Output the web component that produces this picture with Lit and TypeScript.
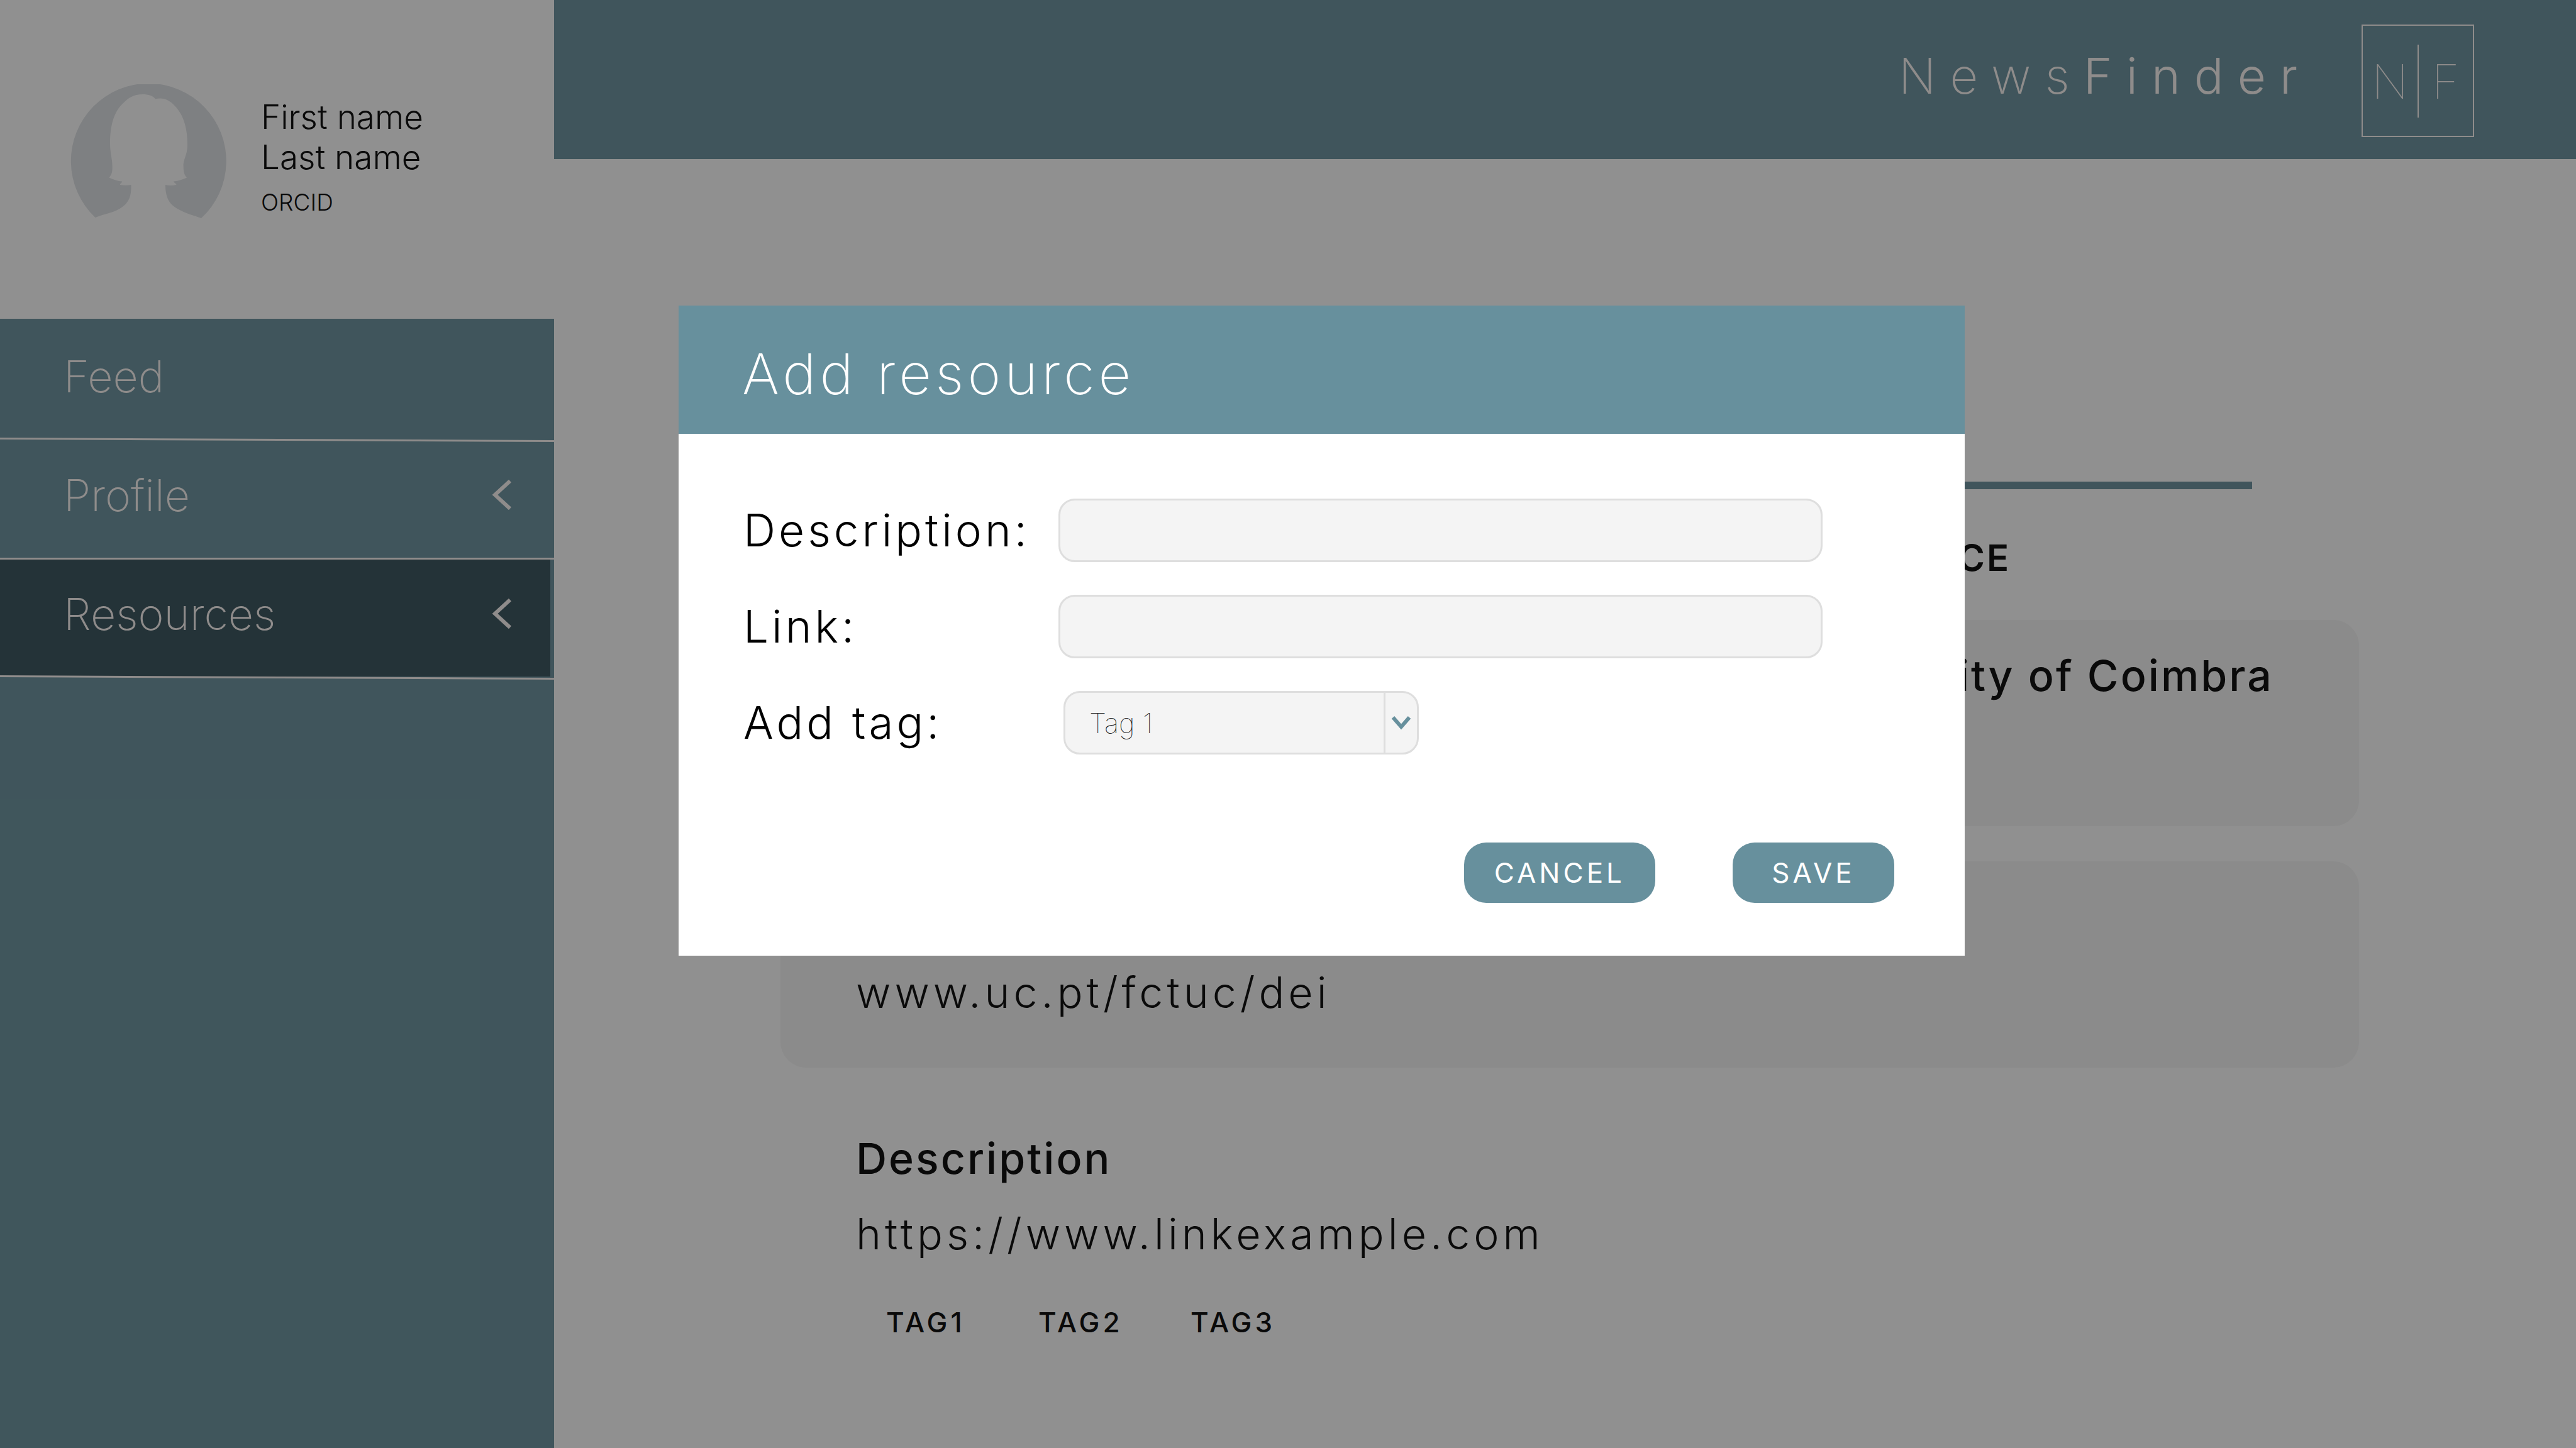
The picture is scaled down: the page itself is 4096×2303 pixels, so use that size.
import { LitElement, html, css, svg, nothing } from "lit";
import { customElement, property, state } from "lit/decorators.js";
import { classMap } from "lit/directives/class-map.js";

interface NavEntry {
  label: string;
  expandable: boolean;
  active: boolean;
  slope: number;
}

interface Resource {
  title?: string;
  titleEnd?: boolean;
  url?: string;
  tags: string[];
  shaded: boolean;
}

const NAV: NavEntry[] = [
  { label: "Feed", expandable: false, active: false, slope: 2 },
  { label: "Profile", expandable: true, active: false, slope: 0 },
  { label: "Resources", expandable: true, active: true, slope: 2 },
];

const RESOURCES: Resource[] = [
  { title: "ity of Coimbra", titleEnd: true, tags: [], shaded: true },
  { url: "www.uc.pt/fctuc/dei", tags: [], shaded: true },
  {
    title: "Description",
    url: "https://www.linkexample.com",
    tags: ["TAG1", "TAG2", "TAG3"],
    shaded: false,
  },
];

const chevronLeft = svg`<path d="M29 2 L5 24 L29 46" fill="none" stroke="currentColor" stroke-width="6" />`;

@customElement("nf-sidebar")
class NfSidebar extends LitElement {
  static styles = css`
    :host {
      display: flex;
      flex-direction: column;
      background: #67909d;
      color: #fdf8f6;
    }
    .user {
      display: flex;
      align-items: flex-start;
      gap: 55px;
      height: 507px;
      box-sizing: border-box;
      padding: 134px 40px 0 112px;
      background: #fff;
      color: #000;
    }
    .avatar {
      width: 248px;
      height: 213px;
      flex: none;
    }
    .who {
      padding-top: 20px;
      font-size: 53px;
      line-height: 64px;
      font-weight: 300;
    }
    .who p {
      margin: 0;
    }
    .who .orcid {
      font-size: 37px;
      line-height: 80px;
    }
    ul {
      list-style: none;
      margin: 0;
      padding: 5px 0 0;
    }
    .item {
      display: flex;
      align-items: center;
      justify-content: space-between;
      height: 186px;
      box-sizing: border-box;
      padding: 0 67px 14px 101px;
      color: inherit;
      text-decoration: none;
      font-size: 70px;
      font-weight: 200;
    }
    .active {
      margin-right: 6px;
      padding-right: 61px;
      background: #324e58;
    }
    .chevron {
      width: 32px;
      height: 48px;
    }
    .line {
      display: block;
      width: 100%;
      height: 3px;
      overflow: visible;
    }
  `;

  render() {
    return html`
      <div class="user">
        <svg class="avatar" viewBox="0 0 248 213" aria-hidden="true">
          <path
            fill="#dde0e4"
            d="M39.5 212 A123.5 123.5 0 1 1 208 213 C194 208 182 205 172 199 C159 192 151 183 151 160 C157 161.500 163 161 168 160 C170 159 164 156.500 164 154.500 C172 154 179 151 185 148.500 C179 142 180 134 179.500 128 C180 119 186 112 186 96 C186 72 181 58 176 48 C168 34 154 18 135 23.500 C131 18 124 16 115 16 C100 16 92 22 85 29 C68 44 63 68 63 94 C63 108 66 116 66.500 128 C67 140 66 143 61.500 148.500 C67 151 74 154 82 154.500 C83 156 79 157 79 160 C85 161 91 161 96.500 160 C97 176 94 186 84 194 C70 205 56 205 39.500 212 Z"
          />
        </svg>
        <div class="who">
          <p>First name</p>
          <p>Last name</p>
          <p class="orcid">ORCID</p>
        </div>
      </div>
      <nav>
        <ul>
          ${NAV.map(
            (n) => html`<li>
              <a class=${classMap({ item: true, active: n.active })} href="#${n.label.toLowerCase()}">
                <span>${n.label}</span>
                ${n.expandable
                  ? html`<svg class="chevron" viewBox="0 0 32 48" aria-hidden="true">${chevronLeft}</svg>`
                  : nothing}
              </a>
              <svg class="line" viewBox="0 0 100 3" preserveAspectRatio="none" aria-hidden="true">
                <line x1="0" y1=${1.5 - n.slope} x2="100" y2=${1.5 + n.slope} stroke="currentColor" stroke-width="3" vector-effect="non-scaling-stroke" />
              </svg>
            </li>`
          )}
        </ul>
      </nav>
    `;
  }
}

@customElement("nf-topbar")
class NfTopbar extends LitElement {
  static styles = css`
    :host {
      display: flex;
      align-items: center;
      justify-content: flex-end;
      gap: 80px;
      height: 253px;
      box-sizing: border-box;
      padding: 4px 162px 0 0;
      background: #67909d;
      color: #fdf8f6;
    }
    .wordmark {
      padding-bottom: 16px;
      font-size: 78px;
      font-weight: 200;
      letter-spacing: 22px;
    }
    .wordmark b {
      font-weight: 300;
    }
    .logo {
      display: grid;
      grid-template-columns: 1fr 2px 1fr;
      align-items: center;
      justify-items: center;
      width: 179px;
      height: 179px;
      box-sizing: border-box;
      border: 2px solid;
      font-size: 76px;
      font-weight: 100;
    }
    .bar {
      width: 2px;
      height: 116px;
      background: #fdf8f6;
    }
  `;

  render() {
    return html`
      <span class="wordmark">News<b>Finder</b></span>
      <div class="logo"><span>N</span><span class="bar"></span><span>F</span></div>
    `;
  }
}

@customElement("nf-card")
class NfCard extends LitElement {
  @property({ attribute: false }) item!: Resource;

  static styles = css`
    :host {
      display: block;
    }
    .card {
      display: grid;
      grid-template-rows: 100px 100px auto;
      row-gap: 20px;
      min-height: 328px;
      box-sizing: border-box;
      padding: 38px 136px 0 120px;
      border-radius: 41px;
      font-size: 68px;
      line-height: 100px;
    }
    .shaded {
      background: #f5f5f5;
    }
    h3 {
      grid-row: 1;
      margin: 0;
      font-size: inherit;
      font-weight: 500;
      letter-spacing: 3px;
      white-space: nowrap;
    }
    .end {
      text-align: right;
    }
    a {
      grid-row: 2;
      justify-self: start;
      color: inherit;
      text-decoration: none;
      font-weight: 300;
      letter-spacing: 6px;
    }
    .tags {
      grid-row: 3;
      display: grid;
      grid-template-columns: repeat(3, 242px);
      margin: 39px 0 0;
      padding: 0 0 0 48px;
      list-style: none;
      font-size: 44px;
      line-height: 64px;
      font-weight: 500;
      letter-spacing: 5px;
    }
  `;

  render() {
    const r = this.item;
    return html`<article class=${classMap({ card: true, shaded: r.shaded })}>
      ${r.title ? html`<h3 class=${classMap({ end: !!r.titleEnd })}>${r.title}</h3>` : nothing}
      ${r.url ? html`<a href="#resource">${r.url}</a>` : nothing}
      ${r.tags.length ? html`<ul class="tags">${r.tags.map((t) => html`<li>${t}</li>`)}</ul>` : nothing}
    </article>`;
  }
}

@customElement("nf-dialog")
class NfDialog extends LitElement {
  @state() private tag = "Tag 1";

  static styles = css`
    :host {
      display: block;
      background: #fff;
      color: #000;
    }
    header {
      height: 204px;
      box-sizing: border-box;
      padding: 12px 101px 0;
      display: flex;
      align-items: center;
      background: #67909d;
      color: #fff;
    }
    h2 {
      margin: 0;
      font-size: 90px;
      font-weight: 200;
      letter-spacing: 6px;
    }
    form {
      padding: 103px 112px 84px 101px;
    }
    .fields {
      display: grid;
      grid-template-columns: 503px 1fr;
      row-gap: 52px;
      align-items: center;
      padding-right: 114px;
    }
    label {
      padding-left: 2px;
      font-size: 71px;
      line-height: 101px;
      font-weight: 300;
      letter-spacing: 5px;
    }
    input,
    select {
      width: 100%;
      height: 101px;
      box-sizing: border-box;
      margin: 0;
      border: 3px solid #dedede;
      border-radius: 26px;
      background: #f4f4f4;
      font-family: inherit;
      font-size: 44px;
      font-weight: 100;
      color: #222;
      padding: 0 38px;
    }
    select {
      appearance: none;
    }
    .picker {
      position: relative;
      width: 565px;
      margin-left: 8px;
    }
    .arrow {
      position: absolute;
      top: 3px;
      right: 3px;
      bottom: 3px;
      width: 53px;
      box-sizing: border-box;
      display: flex;
      align-items: center;
      justify-content: center;
      border-left: 3px solid #dedede;
      color: #67909d;
      pointer-events: none;
    }
    .arrow svg {
      width: 32px;
      height: 24px;
    }
    .actions {
      display: flex;
      justify-content: flex-end;
      gap: 123px;
      margin-top: 140px;
    }
    button {
      min-width: 257px;
      height: 96px;
      border: 0;
      border-radius: 35px;
      padding: 0 48px;
      background: #67909d;
      color: #fff;
      font-family: inherit;
      font-size: 44px;
      font-weight: 400;
      letter-spacing: 5px;
    }
  `;

  private pick(e: Event) {
    this.tag = (e.target as HTMLSelectElement).value;
  }

  render() {
    return html`
      <header><h2 id="title">Add resource</h2></header>
      <form aria-labelledby="title" @submit=${(e: Event) => e.preventDefault()}>
        <div class="fields">
          <label for="description">Description:</label>
          <input id="description" type="text" />
          <label for="link">Link:</label>
          <input id="link" type="text" />
          <label for="tag">Add tag:</label>
          <div class="picker">
            <select id="tag" .value=${this.tag} @change=${this.pick}>
              <option>Tag 1</option>
            </select>
            <span class="arrow">
              <svg viewBox="0 0 32 24" aria-hidden="true">
                <path d="M3 3 L16 18 L29 3" fill="none" stroke="currentColor" stroke-width="6" />
              </svg>
            </span>
          </div>
        </div>
        <div class="actions">
          <button type="button">CANCEL</button>
          <button type="submit">SAVE</button>
        </div>
      </form>
    `;
  }
}

@customElement("app-root")
class AppRoot extends LitElement {
  static styles = css`
    :host {
      display: block;
      position: relative;
      min-height: 100vh;
      background: #fff;
      color: #000;
      font-family: Inter, "Open Sans", sans-serif;
    }
    .page {
      display: grid;
      grid-template-columns: 881px 1fr;
      grid-template-rows: auto 1fr;
      min-height: 100vh;
    }
    nf-sidebar {
      grid-row: 1 / 3;
    }
    main {
      display: flex;
      flex-direction: column;
      padding: 513px 345px 0 360px;
    }
    .rule {
      height: 12px;
      margin: 0 170px 0 0;
      border: 0;
      background: #67909d;
    }
    h2 {
      margin: 69px 554px 59px 0;
      font-size: 58px;
      line-height: 80px;
      font-weight: 600;
      letter-spacing: 3px;
      text-align: right;
    }
    .list {
      display: grid;
      gap: 56px;
    }
    .backdrop {
      position: absolute;
      inset: 0;
      box-sizing: border-box;
      padding: 486px 972px 0 1079px;
      background: rgba(21, 21, 21, 0.475);
    }
  `;

  render() {
    return html`
      <div class="page">
        <nf-sidebar></nf-sidebar>
        <nf-topbar></nf-topbar>
        <main>
          <hr class="rule" />
          <h2>CE</h2>
          <div class="list">${RESOURCES.map((r) => html`<nf-card .item=${r}></nf-card>`)}</div>
        </main>
      </div>
      <div class="backdrop">
        <nf-dialog role="dialog" aria-modal="true" aria-label="Add resource"></nf-dialog>
      </div>
    `;
  }
}
